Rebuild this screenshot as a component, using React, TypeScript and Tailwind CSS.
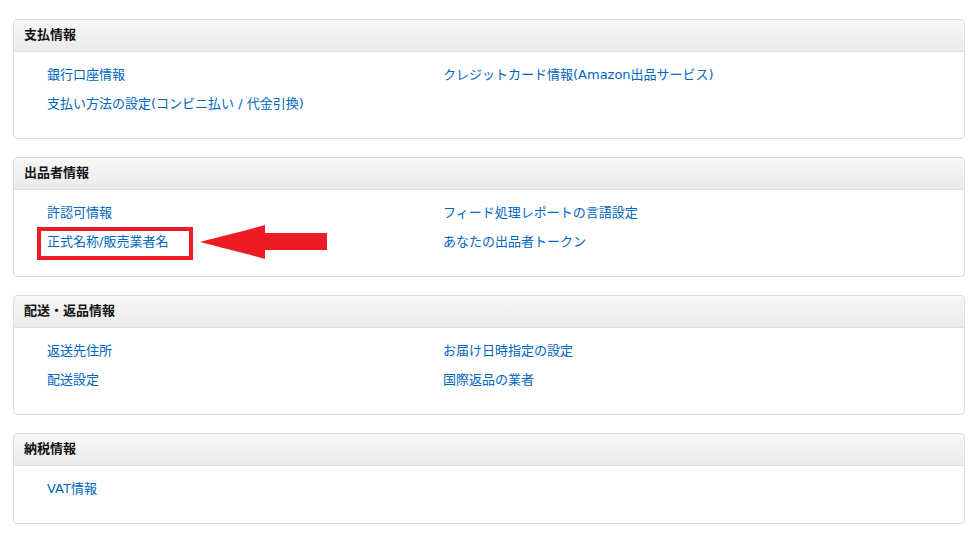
const sections: { title: string; left: string[]; right: string[] }[] = [
  {
    title: "支払情報",
    left: ["銀行口座情報", "支払い方法の設定(コンビニ払い / 代金引換)"],
    right: ["クレジットカード情報(Amazon出品サービス)"],
  },
  {
    title: "出品者情報",
    left: ["許認可情報", "正式名称/販売業者名"],
    right: ["フィード処理レポートの言語設定", "あなたの出品者トークン"],
  },
  {
    title: "配送・返品情報",
    left: ["返送先住所", "配送設定"],
    right: ["お届け日時指定の設定", "国際返品の業者"],
  },
  {
    title: "納税情報",
    left: ["VAT情報"],
    right: [],
  },
]

function Arrow() {
  return (
    <svg className="absolute left-[198px] top-[224px]" width="132" height="36" viewBox="0 0 132 36">
      <path
        d="M2 18 C 25 12, 50 6, 67 1 L 67 9 L 129 9 L 129 26 L 67 26 L 67 35 C 50 30, 25 24, 2 18 Z"
        fill="#ed1c24"
      />
    </svg>
  )
}

export default function App() {
  return (
    <div
      className="relative min-h-screen bg-white pt-[19px] pl-[13px] pr-[14px] text-[13px]"
      style={{ fontFamily: '"DejaVu Sans", "Noto Sans CJK JP", sans-serif' }}
    >
      <div className="flex flex-col gap-[18px]">
        {sections.map((s, i) => (
          <div key={s.title} className="rounded-[4px] border border-[#dddddd] bg-white">
            <div className="flex h-[32px] items-center rounded-t-[4px] border-b border-[#dddddd] bg-gradient-to-b from-[#f7f7f7] to-[#ebebeb] pl-[10px] pb-[1px] font-bold text-[#111111]">
              {s.title}
            </div>
            <div
              className={`grid grid-cols-[396px_1fr] pl-[33px] pt-[8px] ${i === 3 ? "h-[57px]" : "h-[86px]"}`}
            >
              <div className="flex flex-col">
                {s.left.map((l) => (
                  <a key={l} className="h-[29px] leading-[29px] text-[#0066c0]">
                    {l}
                  </a>
                ))}
              </div>
              <div className="flex flex-col">
                {s.right.map((l) => (
                  <a key={l} className="h-[29px] leading-[29px] text-[#0066c0]">
                    {l}
                  </a>
                ))}
              </div>
            </div>
          </div>
        ))}
      </div>
      <div className="absolute left-[37px] top-[227px] h-[33px] w-[156px] border-[4px] border-[#ed1c24]" />
      <Arrow />
    </div>
  )
}
